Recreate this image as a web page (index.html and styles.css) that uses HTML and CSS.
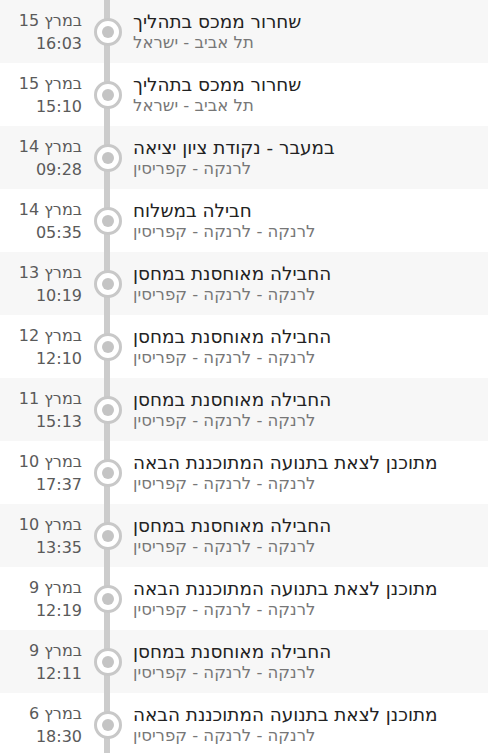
FILE: index.html
```html
<!DOCTYPE html>
<html lang="he">
<head>
<meta charset="utf-8">
<title>מעקב משלוח</title>
<link rel="stylesheet" href="styles.css">
</head>
<body>
<ul class="timeline">
  <li class="event">
    <div class="when"><span class="day"><span>15</span><span>במרץ</span></span><span>16:03</span></div>
    <div class="rail"><span class="dot"></span></div>
    <div class="what"><span class="status">שחרור ממכס בתהליך</span><span class="place">תל אביב - ישראל</span></div>
  </li>
  <li class="event">
    <div class="when"><span class="day"><span>15</span><span>במרץ</span></span><span>15:10</span></div>
    <div class="rail"><span class="dot"></span></div>
    <div class="what"><span class="status">שחרור ממכס בתהליך</span><span class="place">תל אביב - ישראל</span></div>
  </li>
  <li class="event">
    <div class="when"><span class="day"><span>14</span><span>במרץ</span></span><span>09:28</span></div>
    <div class="rail"><span class="dot"></span></div>
    <div class="what"><span class="status">במעבר - נקודת ציון יציאה</span><span class="place">לרנקה - קפריסין</span></div>
  </li>
  <li class="event">
    <div class="when"><span class="day"><span>14</span><span>במרץ</span></span><span>05:35</span></div>
    <div class="rail"><span class="dot"></span></div>
    <div class="what"><span class="status">חבילה במשלוח</span><span class="place">לרנקה - לרנקה - קפריסין</span></div>
  </li>
  <li class="event">
    <div class="when"><span class="day"><span>13</span><span>במרץ</span></span><span>10:19</span></div>
    <div class="rail"><span class="dot"></span></div>
    <div class="what"><span class="status">החבילה מאוחסנת במחסן</span><span class="place">לרנקה - לרנקה - קפריסין</span></div>
  </li>
  <li class="event">
    <div class="when"><span class="day"><span>12</span><span>במרץ</span></span><span>12:10</span></div>
    <div class="rail"><span class="dot"></span></div>
    <div class="what"><span class="status">החבילה מאוחסנת במחסן</span><span class="place">לרנקה - לרנקה - קפריסין</span></div>
  </li>
  <li class="event">
    <div class="when"><span class="day"><span>11</span><span>במרץ</span></span><span>15:13</span></div>
    <div class="rail"><span class="dot"></span></div>
    <div class="what"><span class="status">החבילה מאוחסנת במחסן</span><span class="place">לרנקה - לרנקה - קפריסין</span></div>
  </li>
  <li class="event">
    <div class="when"><span class="day"><span>10</span><span>במרץ</span></span><span>17:37</span></div>
    <div class="rail"><span class="dot"></span></div>
    <div class="what"><span class="status">מתוכנן לצאת בתנועה המתוכננת הבאה</span><span class="place">לרנקה - לרנקה - קפריסין</span></div>
  </li>
  <li class="event">
    <div class="when"><span class="day"><span>10</span><span>במרץ</span></span><span>13:35</span></div>
    <div class="rail"><span class="dot"></span></div>
    <div class="what"><span class="status">החבילה מאוחסנת במחסן</span><span class="place">לרנקה - לרנקה - קפריסין</span></div>
  </li>
  <li class="event">
    <div class="when"><span class="day"><span>9</span><span>במרץ</span></span><span>12:19</span></div>
    <div class="rail"><span class="dot"></span></div>
    <div class="what"><span class="status">מתוכנן לצאת בתנועה המתוכננת הבאה</span><span class="place">לרנקה - לרנקה - קפריסין</span></div>
  </li>
  <li class="event">
    <div class="when"><span class="day"><span>9</span><span>במרץ</span></span><span>12:11</span></div>
    <div class="rail"><span class="dot"></span></div>
    <div class="what"><span class="status">החבילה מאוחסנת במחסן</span><span class="place">לרנקה - לרנקה - קפריסין</span></div>
  </li>
  <li class="event">
    <div class="when"><span class="day"><span>6</span><span>במרץ</span></span><span>18:30</span></div>
    <div class="rail"><span class="dot"></span></div>
    <div class="what"><span class="status">מתוכנן לצאת בתנועה המתוכננת הבאה</span><span class="place">לרנקה - לרנקה - קפריסין</span></div>
  </li>
</ul>
</body>
</html>
```

FILE: styles.css
```css
html, body {
  margin: 0;
  padding: 0;
  background: #ffffff;
}

body {
  font-family: "DejaVu Sans", Verdana, sans-serif;
  overflow: hidden;
}

.timeline {
  list-style: none;
  margin: 0;
  padding: 0;
}

.event {
  display: flex;
  height: 63px;
  background: #ffffff;
}

.event:nth-child(odd) {
  background: #f7f7f7;
}

.when {
  width: 82px;
  flex: none;
  display: flex;
  flex-direction: column;
  justify-content: center;
  align-items: flex-end;
  direction: ltr;
  font-size: 16px;
  line-height: 23px;
  padding-top: 1px;
  box-sizing: border-box;
  color: #5a5a5a;
  white-space: nowrap;
}

.day {
  display: flex;
  gap: 5px;
}

.rail {
  width: 51px;
  flex: none;
  position: relative;
  display: flex;
  align-items: center;
  justify-content: center;
}

.rail::before {
  content: "";
  position: absolute;
  top: 0;
  bottom: 0;
  left: 22px;
  width: 6px;
  background: #cccccc;
}

.dot {
  position: relative;
  box-sizing: border-box;
  width: 28px;
  height: 28px;
  border-radius: 50%;
  border: 3px solid #c8c8c8;
  background: #ffffff;
  display: flex;
  align-items: center;
  justify-content: center;
}

.dot::after {
  content: "";
  width: 12px;
  height: 12px;
  border-radius: 50%;
  background: #c4c4c4;
}

.what {
  flex: 1;
  display: flex;
  flex-direction: column;
  justify-content: center;
  align-items: flex-end;
  direction: rtl;
  white-space: nowrap;
}

.status {
  font-size: 18.4px;
  line-height: 22px;
  color: #222222;
}

.place {
  font-size: 16.5px;
  line-height: 20px;
  color: #777777;
}
```
